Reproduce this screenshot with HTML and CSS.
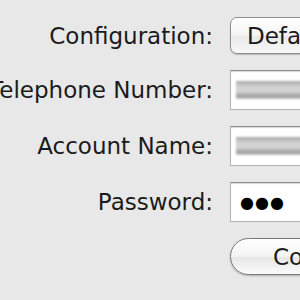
FILE: index.html
```html
<!DOCTYPE html>
<html>
<head>
<meta charset="utf-8">
<link rel="stylesheet" href="styles.css">
</head>
<body>
<div class="form">
  <div class="label">Configuration:</div>
  <div class="popup"><span class="btn-text">Default</span></div>

  <div class="label">Telephone Number:</div>
  <div class="field"><div class="blurred"></div></div>

  <div class="label">Account Name:</div>
  <div class="field"><div class="blurred"></div></div>

  <div class="label">Password:</div>
  <div class="field"><span class="dots">●●●</span></div>

  <div class="label"></div>
  <div class="pill"><span class="btn-text">Connect</span></div>
</div>
</body>
</html>
```

FILE: styles.css
```css
html, body {
  margin: 0;
  padding: 0;
  width: 300px;
  height: 300px;
  overflow: hidden;
  background: #e8e8e8;
}

.form {
  display: grid;
  grid-template-columns: 213px 200px;
  grid-template-rows: 37px 40px 40px 40px 37px;
  column-gap: 17px;
  row-gap: 16px;
  padding-top: 17px;
  font-family: "DejaVu Sans", Verdana, sans-serif;
  font-size: 23px;
  color: #1b1b1b;
}

.label {
  display: flex;
  justify-content: flex-end;
  align-items: center;
  white-space: nowrap;
}

.popup {
  box-sizing: border-box;
  border: 1px solid #8e8e8e;
  border-radius: 7px;
  background: linear-gradient(#ffffff, #f4f4f4 50%, #e9e9e9 51%, #f8f8f8);
  box-shadow: 0 1px 1px rgba(0,0,0,0.2);
  display: flex;
  align-items: center;
  padding-left: 16px;
  white-space: nowrap;
}

.pill {
  box-sizing: border-box;
  border: 1px solid #7a7a7a;
  border-radius: 19px;
  background: linear-gradient(#ffffff, #f3f3f3 50%, #e6e6e6 51%, #fbfbfb);
  box-shadow: 0 1px 2px rgba(0,0,0,0.25);
  display: flex;
  align-items: center;
  padding-left: 42px;
  white-space: nowrap;
}

.field {
  box-sizing: border-box;
  background: #ffffff;
  border: 1px solid #b3b3b3;
  border-top-color: #8a8a8a;
  box-shadow: inset 0 1px 1px rgba(0,0,0,0.15);
  display: flex;
  align-items: center;
  padding-left: 5px;
}

.blurred {
  width: 100%;
  height: 18px;
  background: linear-gradient(#a8a8a8, #cfcfcf 30%, #d8d8d8 55%, #9e9e9e 85%, #c8c8c8);
  filter: blur(1px);
}

.dots {
  font-size: 16px;
  letter-spacing: 1px;
  color: #000;
  padding-left: 4px;
}
```
